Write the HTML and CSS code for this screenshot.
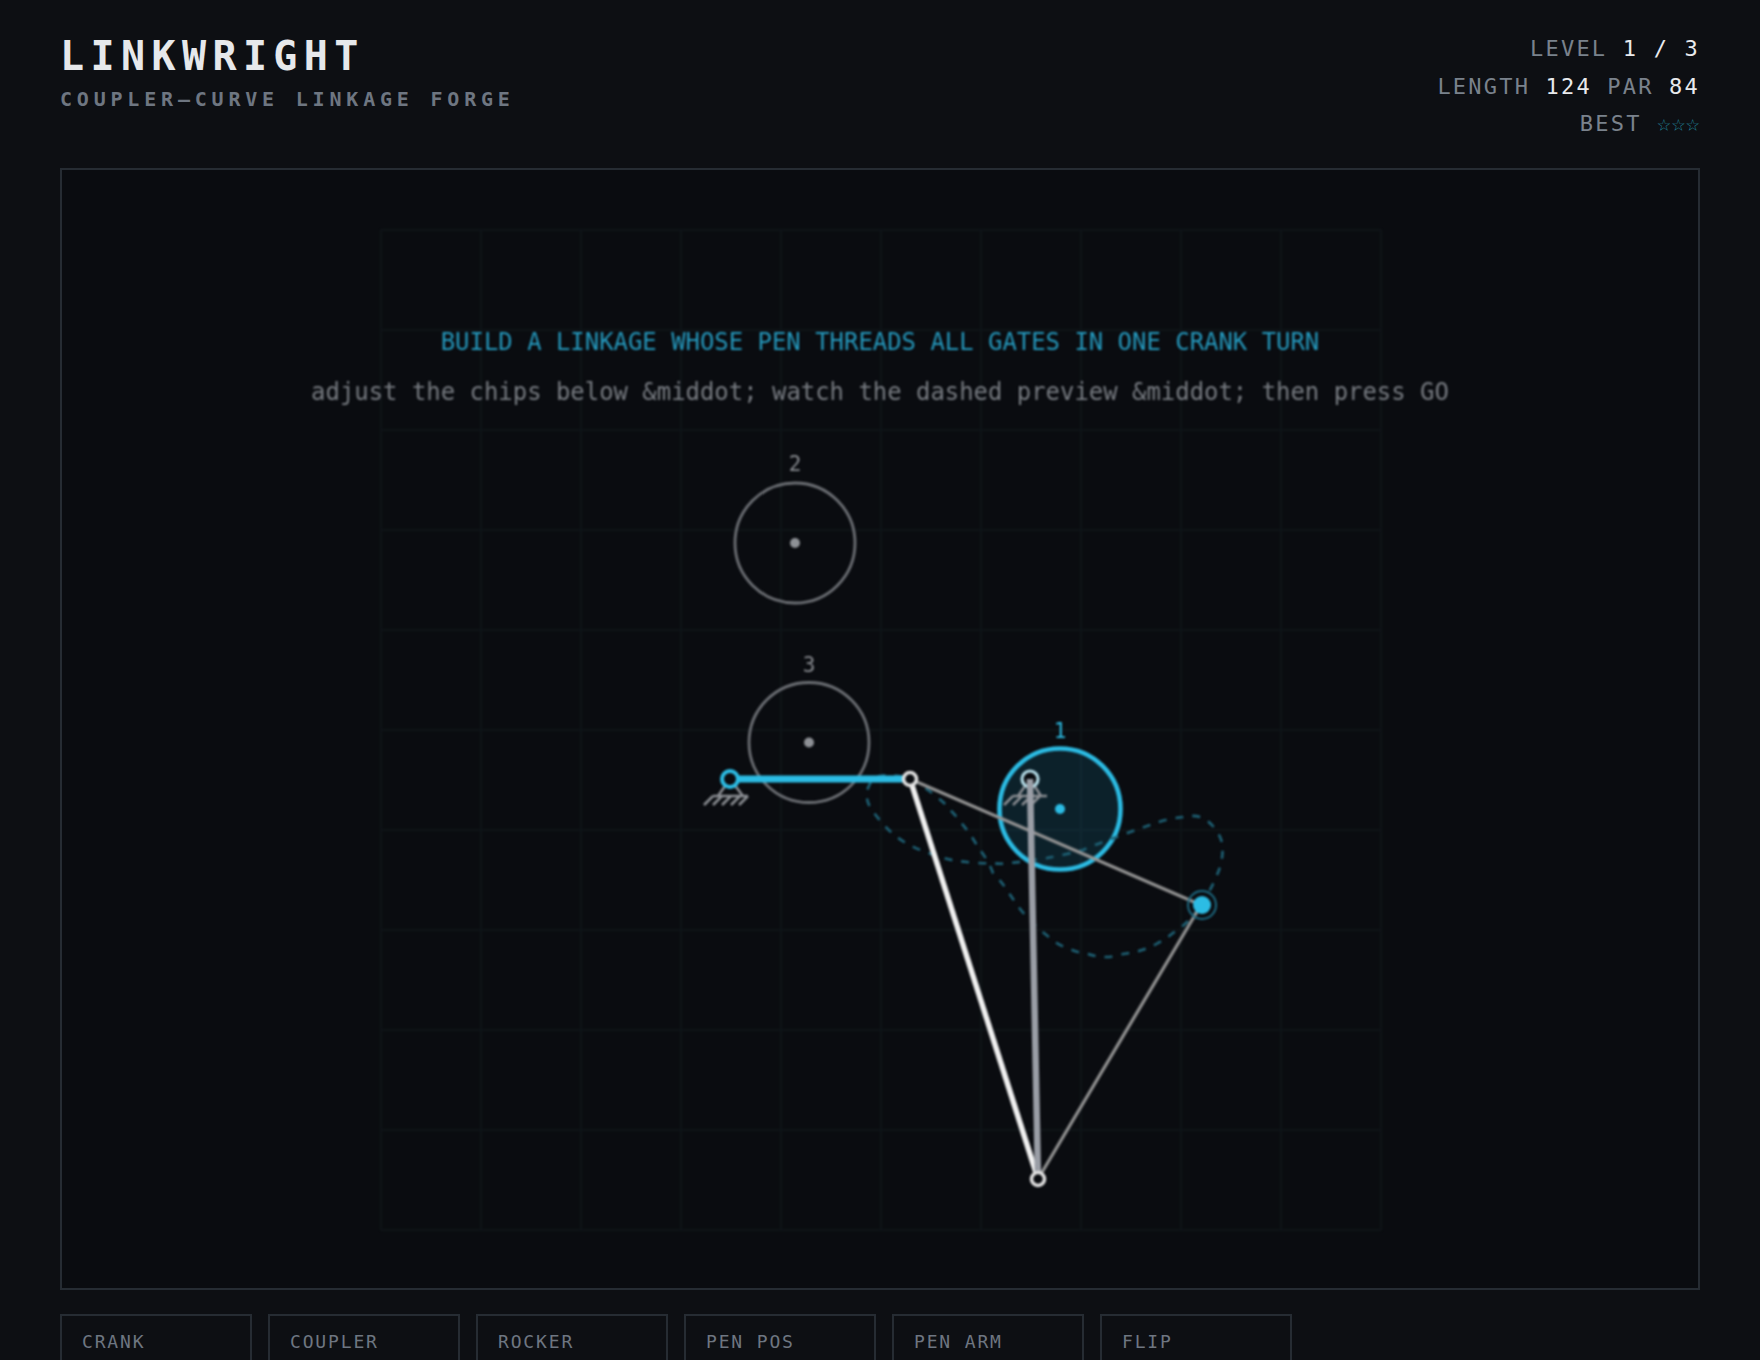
FILE: index.html
```html
<!DOCTYPE html>
<html lang="en">
<head>
<meta charset="utf-8">
<title>Linkwright</title>
<link rel="stylesheet" href="styles.css">
</head>
<body>
<div class="app">
  <header class="top">
    <div class="brand">
      <h1 class="title">LINKWRIGHT</h1>
      <div class="subtitle">COUPLER–CURVE LINKAGE FORGE</div>
    </div>
    <div class="stats">
      <div>LEVEL <b>1 / 3</b></div>
      <div>LENGTH <b>124</b> PAR <b>84</b></div>
      <div>BEST <span class="stars">☆☆☆</span></div>
    </div>
  </header>
  <main class="stage">
    <svg class="board" viewBox="62 170 1636 1118" xmlns="http://www.w3.org/2000/svg">
      <path class="grid" d="M381 230V1230M481 230V1230M581 230V1230M681 230V1230M781 230V1230M881 230V1230M981 230V1230M1081 230V1230M1181 230V1230M1281 230V1230M1381 230V1230M381 230H1381M381 330H1381M381 430H1381M381 530H1381M381 630H1381M381 730H1381M381 830H1381M381 930H1381M381 1030H1381M381 1130H1381M381 1230H1381"/>
      <text class="msg msg-a" x="880" y="350">BUILD A LINKAGE WHOSE PEN THREADS ALL GATES IN ONE CRANK TURN</text>
      <text class="msg msg-b" x="880" y="400">adjust the chips below &amp;middot; watch the dashed preview &amp;middot; then press GO</text>

      <circle class="gate" cx="795" cy="543" r="60"/>
      <circle class="gate-dot" cx="795" cy="543" r="5"/>
      <text class="gate-label" x="795" y="471">2</text>
      <circle class="gate" cx="809" cy="742.5" r="60"/>
      <circle class="gate-dot" cx="809" cy="742.5" r="5"/>
      <text class="gate-label" x="809" y="671.5">3</text>
      <circle class="gate gate-on" cx="1060" cy="809" r="60.5"/>
      <circle class="gate-dot gate-dot-on" cx="1060" cy="809" r="5"/>
      <text class="gate-label gate-label-on" x="1060" y="737.5">1</text>

      <path class="curve" d="M1201 905C1207 896 1215 882 1220 867C1223 857 1223 847 1222 843C1220 833 1210 820 1200 817C1194 815 1185 816 1183 817C1172 818 1160 821 1150 825C1138 829 1125 834 1117 837C1105 841 1092 846 1083 850C1072 853 1058 856 1047 858C1034 860 1020 862 1010 863C1002 864 998 864 993 863C982 864 968 862 957 861C945 859 934 855 923 851C912 847 901 841 892 833C885 827 875 815 870 807C866 799 866 794 868 788C871 780 875 777 880 776C889 774 903 776 910 779C917 782 933 793 943 802C948 807 951 811 955 815C959 820 963 825 967 830C971 835 975 842 978 847C983 854 989 862 993 873C999 879 1003 884 1007 890C1010 895 1014 900 1017 905C1020 909 1024 914 1028 918C1032 922 1036 926 1040 930C1045 934 1050 938 1055 942C1060 945 1066 948 1072 950C1077 952 1082 953 1088 954C1094 956 1100 957 1107 957C1112 957 1118 955 1123 954C1130 953 1136 952 1142 950C1148 948 1153 946 1158 943C1164 940 1168 937 1173 933C1178 930 1183 926 1187 922C1192 917 1197 911 1201 905Z"/>

      <path class="ground" d="M718 796L730 779L743 796M713 796H748M713 796L704 805M722 796L713 805M731 796L722 805M740 796L731 805M748 796L739 805"/>
      <path class="ground" d="M1018 796L1030 779L1041 796M1013 796H1047M1013 796L1004 805M1022 796L1013 805M1031 796L1022 805M1040 796L1031 805"/>

      <line class="link-crank" x1="730" y1="779" x2="910" y2="779"/>
      <line class="link-main" x1="910" y1="779" x2="1038" y2="1179"/>
      <line class="link-thin" x1="910" y1="779" x2="1201" y2="905"/>
      <line class="link-thin" x1="1038" y1="1179" x2="1201" y2="905"/>

      <circle class="pivot" cx="730" cy="779" r="8"/>
      <circle class="pivot-b" cx="1030" cy="779" r="8"/>
      <line class="link-rocker" x1="1030" y1="779" x2="1038" y2="1179"/>
      <circle class="joint" cx="910" cy="779" r="6.5"/>
      <circle class="joint" cx="1038" cy="1179" r="6.5"/>
      <circle class="pen-ring" cx="1202" cy="905" r="14"/>
      <circle class="pen" cx="1202" cy="905" r="9"/>
    </svg>
  </main>
  <section class="chips">
    <div class="chip">CRANK</div>
    <div class="chip">COUPLER</div>
    <div class="chip">ROCKER</div>
    <div class="chip">PEN POS</div>
    <div class="chip">PEN ARM</div>
    <div class="chip">FLIP</div>
  </section>
</div>
</body>
</html>
```
FILE: styles.css
```css
* { box-sizing: border-box; }
html, body { margin: 0; height: 1360px; overflow: hidden; background: #0d0f13; }
body { font-family: "DejaVu Sans Mono", monospace; color: #7a828c; }
.app { padding: 29px 60px 0; display: flex; flex-direction: column; }
.top { display: flex; justify-content: space-between; align-items: flex-start; height: 139px; }
.title { margin: 0; font-size: 40px; line-height: 54px; font-weight: 700; letter-spacing: 6.4px; color: #e6e8eb; }
.subtitle { margin-top: 4px; font-size: 20px; line-height: 24px; font-weight: 700; letter-spacing: 4.8px; color: #6e7681; }
.stats { font-size: 22px; line-height: 37.5px; letter-spacing: 2.2px; text-align: right; margin-top: 1px; }
.stats b { font-weight: 400; color: #e8eaed; }
.stars { color: #22879f; font-size: 23px; letter-spacing: 0.45px; line-height: 1; }
.stage { height: 1122px; border: 2px solid #262c33; background: #0a0c10; overflow: hidden; }
.board { display: block; width: 100%; height: 100%; filter: blur(0.8px); }
.grid { fill: none; stroke: #0f1418; stroke-width: 2; }
.msg { font-size: 23.93px; text-anchor: middle; font-family: "DejaVu Sans Mono", monospace; }
.msg-a { fill: #2598bc; }
.msg-b { fill: #787c82; }
.gate { fill: none; stroke: #6c6f74; stroke-width: 2.8; }
.gate-on { fill: rgba(34, 181, 224, 0.13); stroke: #2cbce4; stroke-width: 4.6; }
.gate-dot { fill: #8e9196; }
.gate-dot-on { fill: #2cbce4; }
.gate-label { font-size: 21px; text-anchor: middle; fill: #8a8d92; font-family: "DejaVu Sans Mono", monospace; }
.gate-label-on { fill: #2cbce4; }
.curve { fill: none; stroke: #1e6276; stroke-width: 2.6; stroke-dasharray: 8 9; }
.ground { fill: none; stroke: #8b8e93; stroke-width: 2.6; }
.link-crank { stroke: #2cbce4; stroke-width: 7; }
.link-rocker { stroke: #9a9ea6; stroke-width: 6.5; }
.link-main { stroke: #f0f0f0; stroke-width: 5.5; }
.link-thin { stroke: #939393; stroke-width: 3.2; }
.pivot { fill: #0a0c10; stroke: #2cbce4; stroke-width: 4; }
.pivot-b { fill: #0a0c10; stroke: #b4dbe6; stroke-width: 3.2; }
.joint { fill: #0a0c10; stroke: #e0e0e0; stroke-width: 3.6; }
.pen { fill: #2cbce4; }
.pen-ring { fill: none; stroke: #1d6a82; stroke-width: 2; }
.chips { display: flex; gap: 16px; margin-top: 24px; }
.chip { width: 192px; height: 90px; border: 2px solid #262c33; padding: 14px 20px; font-size: 18px; line-height: 24px; letter-spacing: 1.85px; color: #6e7681; }
```
